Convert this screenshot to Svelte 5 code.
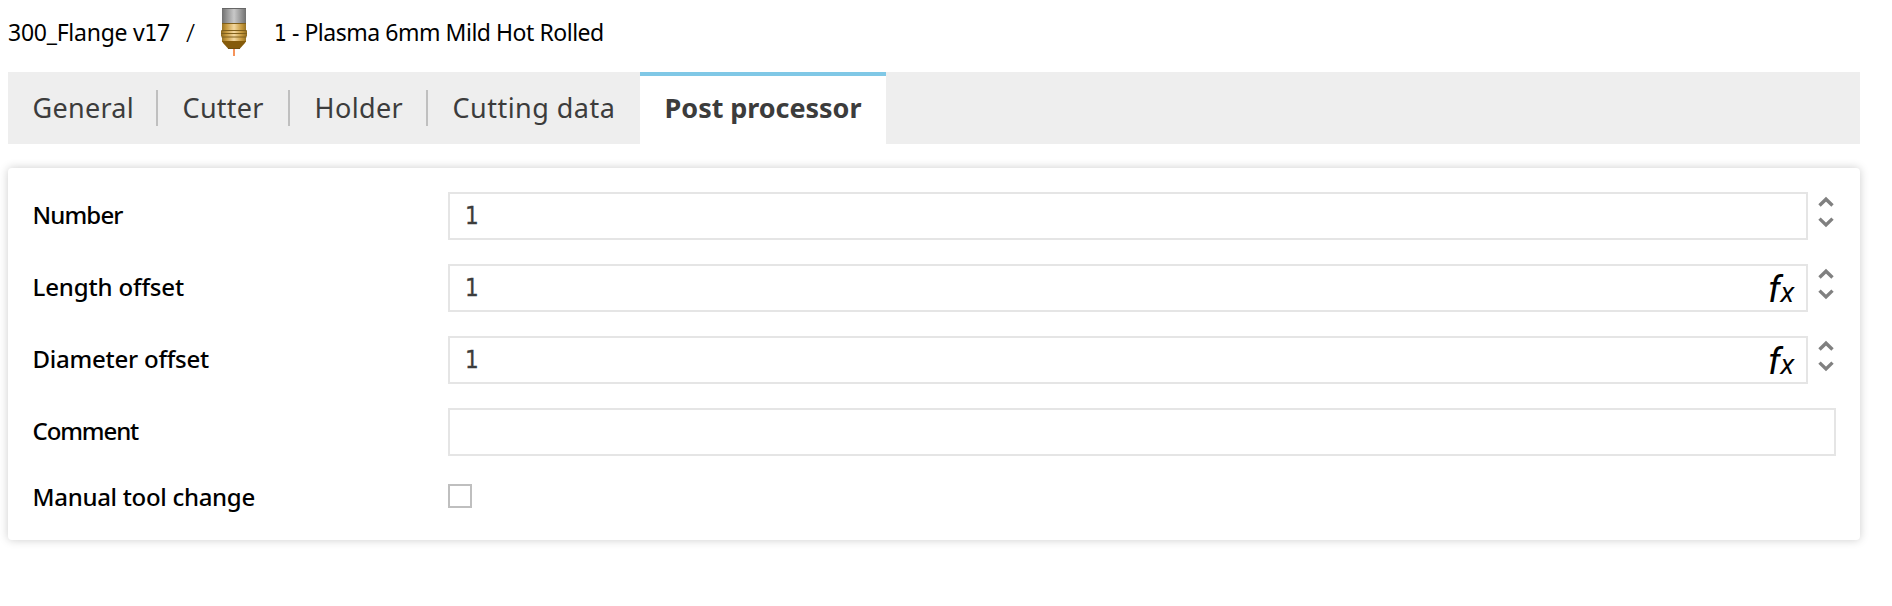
<script>
  const tabs = [
    { label: 'General', width: 150, spacing: 0.25 },
    { label: 'Cutter', width: 132, spacing: 0.25 },
    { label: 'Holder', width: 138, spacing: 0.35 },
    { label: 'Cutting data', width: 212, spacing: 0.46 },
    { label: 'Post processor', width: 246, spacing: -0.05, active: true }
  ];
  const rows = [
    { label: 'Number', value: '1', spin: true, spacing: -0.85 },
    { label: 'Length offset', value: '1', spin: true, fx: true, spacing: -0.15 },
    { label: 'Diameter offset', value: '1', spin: true, fx: true, spacing: -0.24 },
    { label: 'Comment', value: '', spacing: -1.1 }
  ];
</script>

<header>
  <span class="doc">300_Flange v<span class="one">1</span>7</span>
  <span class="slash">/</span>
  <svg class="tool" width="28" height="50" viewBox="0 0 28 50">
    <defs>
      <linearGradient id="steel">
        <stop offset="0" stop-color="#707070" />
        <stop offset=".2" stop-color="#959595" />
        <stop offset=".5" stop-color="#c8c8c8" />
        <stop offset=".8" stop-color="#959595" />
        <stop offset="1" stop-color="#707070" />
      </linearGradient>
      <linearGradient id="brass">
        <stop offset="0" stop-color="#8c6a20" />
        <stop offset=".2" stop-color="#c5983c" />
        <stop offset=".5" stop-color="#f3d8a0" />
        <stop offset=".8" stop-color="#c5983c" />
        <stop offset="1" stop-color="#8c6a20" />
      </linearGradient>
    </defs>
    <rect x="13" y="40" width="2" height="8" fill="#f6935a" />
    <rect x="2" y="0" width="24" height="16" fill="url(#steel)" />
    <path d="M2 .5h24" stroke="#666" />
    <path d="M2 15h24v7l1 1v5l-1 1v5H2v-5l-1-1v-5l1-1z" fill="url(#brass)" />
    <path d="M2 15.500h24M1.500 22.500h25M1 25.500h26M1.500 29h25" stroke="#80601c" stroke-width="1" />
    <path d="M2 33h24l-1 2-5 5.500H8L3 35z" fill="#855b0a" />
    <path d="M8 40.500h12" stroke="#6e4e10" />
  </svg>
  <span class="title"><span class="one">1</span> - Plasma 6mm Mild Hot Rolled</span>
</header>

<nav>
  {#each tabs as tab, i}
    <div class="tab" class:active={tab.active} class:divided={i < 3} style:width="{tab.width}px" style:letter-spacing="{tab.spacing}px">{tab.label}</div>
  {/each}
</nav>

<main>
  {#each rows as row}
    <div class="row">
      <span class="label" style:letter-spacing="{row.spacing}px">{row.label}</span>
      <div class="input">
        <span class="value">{row.value}</span>
        {#if row.fx}<span class="fx">f<small>x</small></span>{/if}
      </div>
      {#if row.spin}
        <svg class="spin" width="28" height="48" viewBox="0 0 28 48" fill="none" stroke="#808080" stroke-width="3.400">
          <path d="M11.500 13.500 18 7.200l6.500 6.300M11.500 26.600l6.500 6.300 6.500-6.300" />
        </svg>
      {/if}
    </div>
  {/each}
  <div class="row check">
    <span class="label">Manual tool change</span>
    <span class="box"></span>
  </div>
</main>

<style>
  :global(body) {
    background: #fff;
    color: #000;
    font-family: 'Noto Sans', sans-serif;
  }
  :global(#app) {
    padding-bottom: 66px;
  }
  header {
    display: flex;
    align-items: flex-start;
    height: 72px;
    box-sizing: border-box;
    padding-left: 8px;
    font-size: 23px;
    line-height: 64px;
    white-space: pre;
  }
  .one {
    font-family: 'DejaVu Sans Condensed', 'DejaVu Sans', sans-serif;
    font-stretch: condensed;
    font-size: 0.98em;
    line-height: 1;
  }
  .doc {
    width: 178px;
    letter-spacing: -0.25px;
  }
  .slash {
    width: 34px;
    font-size: 26px;
    font-weight: 300;
  }
  .tool {
    margin-top: 8px;
  }
  .title {
    margin-left: 26px;
    letter-spacing: -0.47px;
  }
  nav {
    display: flex;
    height: 72px;
    margin: 0 32px 0 8px;
    background: #eee;
    color: #3c3c3c;
    font-size: 27px;
    line-height: 72px;
  }
  .tab {
    display: flex;
    align-items: center;
    justify-content: space-between;
    box-sizing: border-box;
    padding-left: 24.6px;
    white-space: nowrap;
  }
  .divided::after {
    content: '';
    width: 2px;
    height: 36px;
    background: #bfbfbf;
  }
  .active {
    background: #fff;
    border-top: 4px solid #80c8e6;
    padding-bottom: 4px;
    font-weight: 700;
    line-height: 64px;
  }
  main {
    display: flex;
    flex-direction: column;
    gap: 24px;
    height: 372px;
    box-sizing: border-box;
    margin: 24px 32px 0 8px;
    padding: 24px 24px 0;
    border-radius: 4px;
    background: #fff;
    box-shadow: 0 0 10px rgba(0, 0, 0, 0.2);
  }
  .row {
    display: flex;
    height: 48px;
    line-height: 46px;
    font-size: 24px;
  }
  .label {
    width: 416px;
    box-sizing: border-box;
    flex: none;
    padding-left: 0.5px;
    font-weight: 500;
    white-space: nowrap;
  }
  .input {
    display: flex;
    flex: 1;
    justify-content: space-between;
    box-sizing: border-box;
    border: 2px solid #e5e5e5;
    padding: 0 12px 0 15px;
    line-height: 44px;
  }
  .value {
    font-family: 'DejaVu Sans Condensed', 'DejaVu Sans', sans-serif;
    font-stretch: condensed;
    color: #3c3c3c;
    -webkit-text-stroke: 0.3px #3c3c3c;
  }
  .fx {
    font-family: Roboto, sans-serif;
    font-size: 37px;
    font-style: italic;
    line-height: 48px;
  }
  small {
    font-family: 'Noto Sans', sans-serif;
    font-size: 28px;
    line-height: 1;
  }
  .spin {
    flex: none;
  }
  .check {
    height: 24px;
    margin-top: 4px;
    line-height: 26px;
  }
  .check .label {
    letter-spacing: -0.3px;
  }
  .box {
    width: 24px;
    height: 24px;
    box-sizing: border-box;
    border: 2px solid #bfbfbf;
  }
</style>
